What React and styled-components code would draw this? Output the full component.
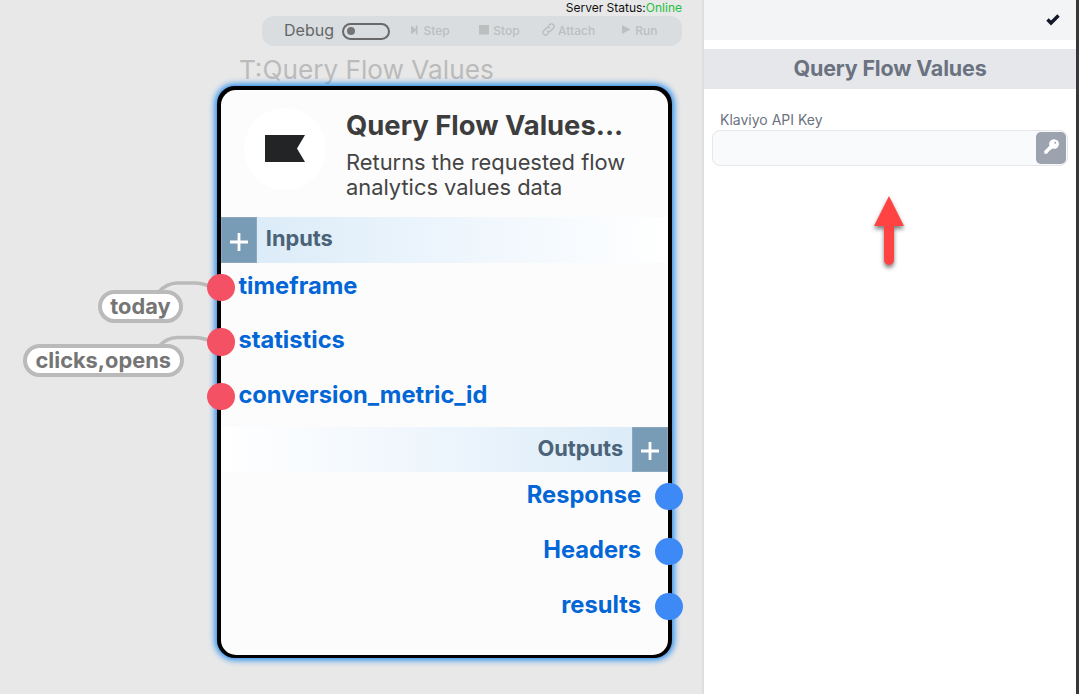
import React from "react";
import styled, { createGlobalStyle } from "styled-components";

const Global = createGlobalStyle`
  * { box-sizing: border-box; }
  body { margin: 0; font-family: Inter, "Liberation Sans", sans-serif; overflow: hidden; }
`;

const Page = styled.div`
  display: flex;
  width: 1079px;
  height: 694px;
  background: #fff;
`;

const Canvas = styled.main`
  position: relative;
  flex: 0 0 704px;
  background: #e8e8e8;
  border-right: 2px solid #dcdee2;
  overflow: hidden;
`;

const Status = styled.div`
  position: absolute;
  top: 0;
  right: 20px;
  font-size: 12px;
  line-height: 16px;
  color: #111;
  white-space: nowrap;
`;

const Online = styled.span`
  color: #22c043;
`;

const DebugBar = styled.div`
  position: absolute;
  left: 262px;
  top: 16px;
  width: 420px;
  height: 30px;
  padding-left: 22px;
  display: flex;
  align-items: center;
  border-radius: 12px;
  background: #d9dde0;
`;

const DebugLabel = styled.span`
  width: 58px;
  font-size: 16px;
  line-height: 28px;
  margin-top: -2px;
  color: #666;
`;

const Toggle = styled.span`
  width: 48px;
  height: 17px;
  padding: 0 3px;
  margin-top: 0;
  display: flex;
  align-items: center;
  border: 2px solid #696969;
  border-radius: 9px;
  &::before {
    content: "";
    width: 8px;
    height: 8px;
    border-radius: 50%;
    background: #757575;
  }
`;

const Action = styled.span`
  display: flex;
  align-items: center;
  gap: ${(p) => p.$gap}px;
  margin-left: ${(p) => p.$before}px;
  margin-top: -1px;
  font-size: 12px;
  font-weight: 500;
  color: #bcbebf;
  svg { display: block; fill: currentColor; margin-bottom: 2px; }
`;

const NodeTag = styled.div`
  position: absolute;
  left: 239px;
  top: 53px;
  font-size: 26.2px;
  line-height: 34px;
  color: #bbb;
  white-space: nowrap;
`;

const Node = styled.section`
  position: absolute;
  left: 217px;
  top: 86px;
  width: 455px;
  height: 572px;
  padding: 3.5px 3.6px 3.5px 3.5px;
  border-radius: 18px;
  background: #000;
  box-shadow: 0 0 6px 2px #1e88ec;
`;

const NodeBody = styled.div`
  height: 100%;
  border-radius: 15px;
  background: #fcfcfc;
`;

const NodeHead = styled.header`
  display: flex;
  height: 127.5px;
  padding: 18px 0 0 23.5px;
`;

const Logo = styled.div`
  width: 82px;
  height: 82px;
  border-radius: 50%;
  background: #fff;
  display: flex;
  align-items: center;
  justify-content: center;
`;

const HeadText = styled.div`
  padding-left: 20px;
`;

const Title = styled.h1`
  margin: 0;
  font-size: 27.4px;
  line-height: 35px;
  font-weight: 700;
  color: #3d3d3d;
  white-space: nowrap;
`;

const Description = styled.p`
  margin: 7.5px 0 0;
  width: 300px;
  font-size: 21.87px;
  line-height: 25px;
  color: #444;
`;

const Band = styled.div`
  display: flex;
  flex-direction: ${(p) => (p.$end ? "row-reverse" : "row")};
  height: 45.5px;
  background: linear-gradient(${(p) => (p.$end ? "to left" : "to right")}, #d8eaf7, #ebf4fc 45%, #fff);
`;

const AddButton = styled.button`
  width: 36.3px;
  height: 45.5px;
  padding: 4px 0 0;
  border: 1px solid #8ba8be;
  background: #789bb6;
  display: flex;
  align-items: center;
  justify-content: center;
`;

const BandLabel = styled.span`
  padding: 0 9px;
  font-size: 21.8px;
  line-height: 43px;
  font-weight: 700;
  color: #4a6378;
`;

const Port = styled.div`
  display: flex;
  flex-direction: ${(p) => (p.$end ? "row-reverse" : "row")};
  height: ${(p) => (p.$end ? 54.8 : 54.7)}px;
  margin: ${(p) => (p.$end ? "0 -14.4px 0 0" : "0 0 0 -13.1px")};
  gap: ${(p) => (p.$end ? 14.4 : 3.6)}px;
`;

const Dot = styled.span`
  flex: none;
  width: 27.4px;
  height: 27.4px;
  margin-top: 11px;
  border-radius: 50%;
  background: ${(p) => (p.$end ? "#3d8af7" : "#f45164")};
`;

const PortName = styled.span`
  font-size: 23.7px;
  line-height: 46.4px;
  font-weight: 700;
  color: #0366d6;
`;

const Wires = styled.svg`
  position: absolute;
  left: 0;
  top: 260px;
`;

const Pill = styled.div`
  position: absolute;
  left: ${(p) => p.$x}px;
  top: ${(p) => p.$y}px;
  width: ${(p) => p.$w}px;
  height: 32.5px;
  border: 4px solid #bababa;
  border-radius: 17px;
  background: #fff;
  font-size: 21.8px;
  line-height: 24.5px;
  font-weight: 700;
  text-align: center;
  color: #757575;
`;

const Panel = styled.aside`
  flex: 1;
  border-right: 3px solid #373737;
  background: #fff;
`;

const PanelBar = styled.div`
  height: 40px;
  padding: 0 15px 2px;
  display: flex;
  align-items: center;
  justify-content: flex-end;
  background: #f3f4f6;
`;

const PanelTitle = styled.h2`
  margin: 9px 0 0;
  height: 40px;
  font-size: 21.5px;
  line-height: 39px;
  font-weight: 700;
  letter-spacing: -0.008em;
  text-align: center;
  color: #6b7280;
  background: #e5e7eb;
`;

const Field = styled.div`
  padding: 21px 8px 0;
`;

const Label = styled.label`
  display: block;
  padding-left: 8px;
  font-size: 14px;
  line-height: 20px;
  color: #6b7280;
`;

const InputBox = styled.div`
  height: 36px;
  padding: 1px;
  display: flex;
  justify-content: flex-end;
  border: 1px solid #e5e7eb;
  border-radius: 8px;
  background: #f9fafb;
`;

const KeyButton = styled.button`
  width: 30px;
  height: 32px;
  padding: 0 0 3px;
  border: 0;
  border-radius: 5px;
  background: #9ca3af;
  display: flex;
  align-items: center;
  justify-content: center;
`;

const Pointer = styled.svg`
  display: block;
  margin: 14px 0 0 160px;
`;

const Plus = () => (
  <svg width="18" height="18" viewBox="0 0 18 18">
    <path d="M9 0v18M0 9h18" stroke="#fff" strokeWidth="2.8" />
  </svg>
);

export default function App() {
  return (
    <>
      <Global />
      <Page>
        <Canvas>
          <Status>Server Status:<Online>Online</Online></Status>
          <DebugBar>
            <DebugLabel>Debug</DebugLabel>
            <Toggle />
            <Action $before={21} $gap={5.5}>
              <svg width="7" height="10" viewBox="0 0 7 10"><path d="M0 .5 4.800 4.300V.5H6.500v9H4.800V5.700L0 9.500z" /></svg>
              Step
            </Action>
            <Action $before={29} $gap={4.5}>
              <svg width="10" height="10" viewBox="0 0 10 10"><path d="M0 0h10v9.500H0z" /></svg>
              Stop
            </Action>
            <Action $before={22.5} $gap={3}>
              <svg width="13" height="13" viewBox="0 0 24 24">
                <g fill="none" stroke="currentColor" strokeWidth="2.600" strokeLinecap="round" strokeLinejoin="round">
                  <path d="M10 15a5 5 0 0 0 6-.5l5-5a4.600 4.600 0 0 0-6.500-6.500l-3 3" />
                  <path d="M14 9a5 5 0 0 0-6 .5l-5 5A4.600 4.600 0 0 0 9.500 21l3-3" />
                </g>
              </svg>
              Attach
            </Action>
            <Action $before={26.5} $gap={4.5}>
              <svg width="9" height="9" viewBox="0 0 9 9"><path d="M0 0 8.500 4.500 0 9z" /></svg>
              Run
            </Action>
          </DebugBar>
          <NodeTag>T:Query Flow Values</NodeTag>
          <Wires width="230" height="100" viewBox="0 260 230 100">
            <g fill="none" stroke="#bababa" strokeWidth="3.6">
              <path d="M158 292.500Q167 283 177 283h17q9 0 17 4" />
              <path d="M158 347Q167 337.500 177 337.500h17q9 0 17 4" />
            </g>
          </Wires>
          <Pill $x={98} $y={290} $w={85}>today</Pill>
          <Pill $x={22.5} $y={344.4} $w={161.5}>clicks,opens</Pill>
          <Node>
            <NodeBody>
              <NodeHead>
                <Logo>
                  <svg width="40" height="27" viewBox="0 0 40 27"><path d="M0 0h40l-8 13.500L40 27H0z" fill="#232426" /></svg>
                </Logo>
                <HeadText>
                  <Title>Query Flow Values...</Title>
                  <Description>Returns the requested flow analytics values data</Description>
                </HeadText>
              </NodeHead>
              <Band>
                <AddButton><Plus /></AddButton>
                <BandLabel>Inputs</BandLabel>
              </Band>
              {["timeframe", "statistics", "conversion_metric_id"].map((name) => (
                <Port key={name}><Dot /><PortName>{name}</PortName></Port>
              ))}
              <Band $end>
                <AddButton><Plus /></AddButton>
                <BandLabel>Outputs</BandLabel>
              </Band>
              {["Response", "Headers", "results"].map((name) => (
                <Port key={name} $end><Dot $end /><PortName>{name}</PortName></Port>
              ))}
            </NodeBody>
          </Node>
        </Canvas>
        <Panel>
          <PanelBar>
            <svg width="16" height="13" viewBox="0 0 16 13"><path d="M2.500 6.500 6 10 13.500 2.500" fill="none" stroke="#111827" strokeWidth="3.400" /></svg>
          </PanelBar>
          <PanelTitle>Query Flow Values</PanelTitle>
          <Field>
            <Label>Klaviyo API Key</Label>
            <InputBox>
              <KeyButton>
                <svg width="15" height="15" viewBox="0 0 15 15">
                  <path fill="#fff" fillRule="evenodd" d="M10 .2a4.800 4.800 0 1 1-1.500 9.300L7.200 10.500 6 11.300 4.800 12.500 3 14.800H.3v-2.700L5.500 6.800A4.800 4.800 0 0 1 10 .2zM11.200 2.800a1 1 0 1 0 0 2 1 1 0 0 0 0-2z" />
                </svg>
              </KeyButton>
            </InputBox>
          </Field>
          <Pointer width="50" height="100" viewBox="864 180 50 100">
            <path d="M889 196 904 226H894v34a5 5 0 0 1-10 0V226H874z" fill="#ff4343" style={{ filter: "drop-shadow(0 3px 2px rgba(0,0,0,.5))" }} />
          </Pointer>
        </Panel>
      </Page>
    </>
  );
}
